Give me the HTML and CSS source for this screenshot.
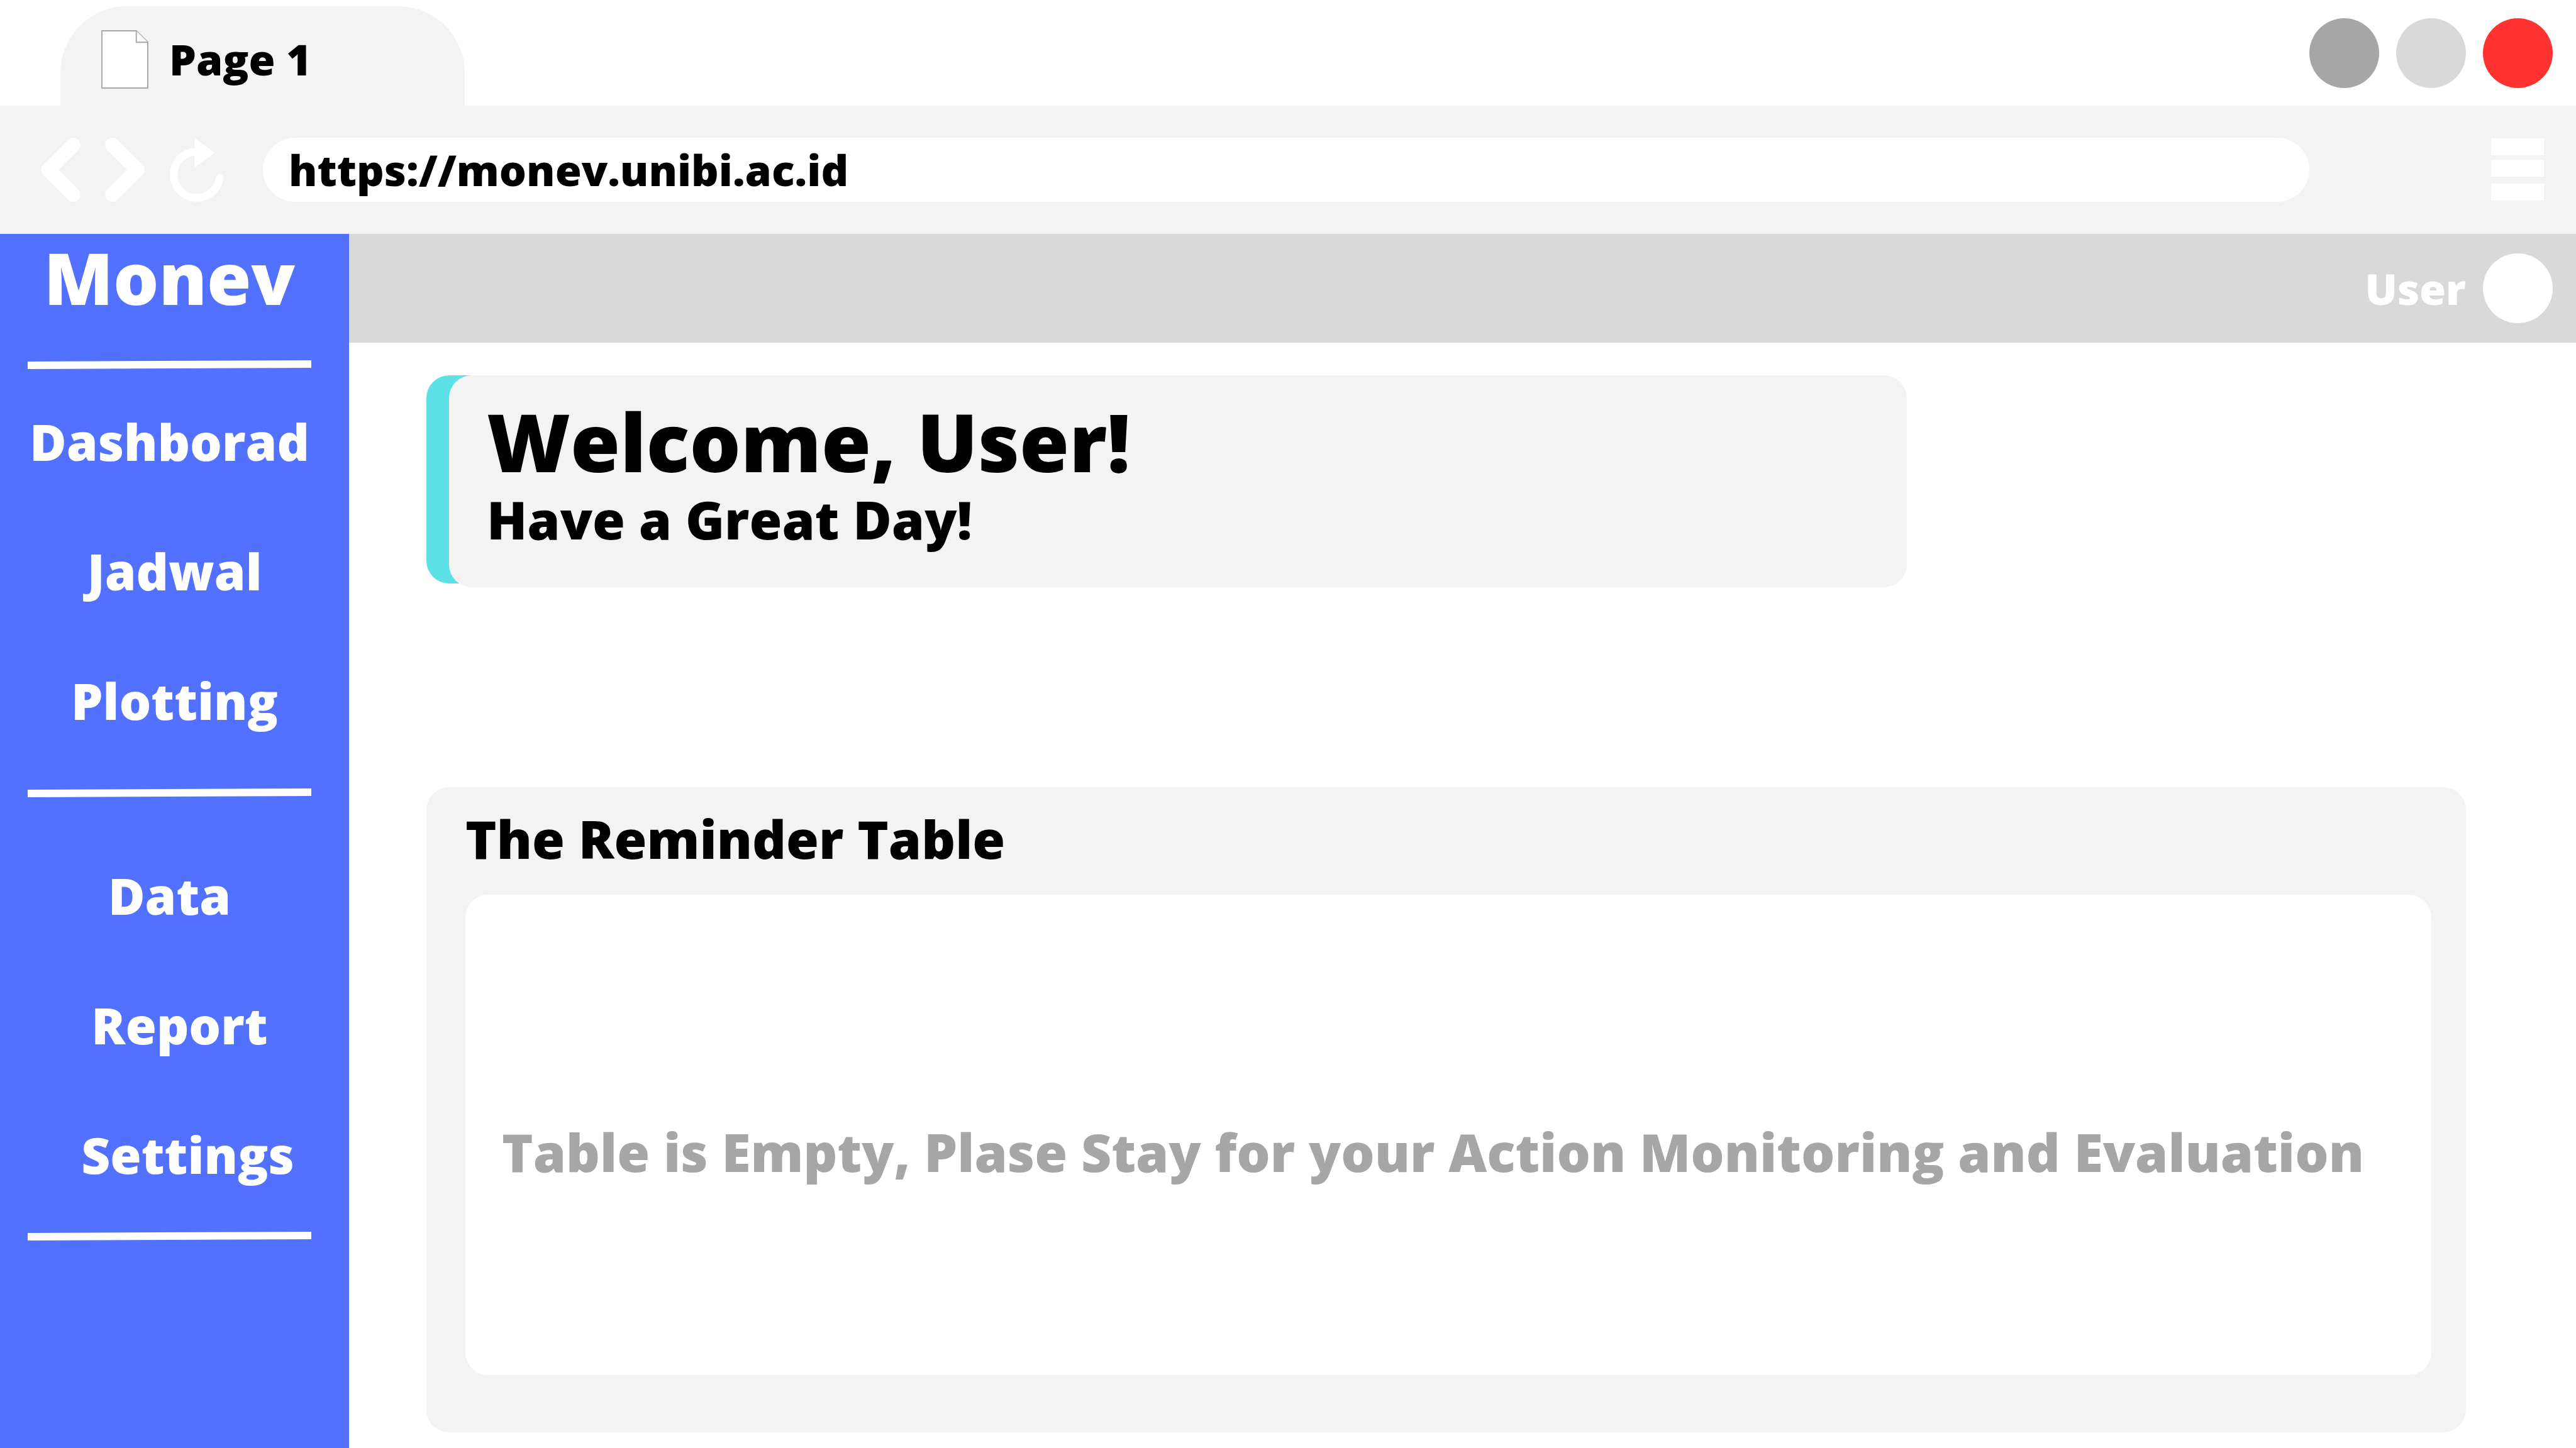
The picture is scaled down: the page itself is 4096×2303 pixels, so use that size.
FILE: index.html
```html
<!DOCTYPE html>
<html lang="id">
<head>
  <meta charset="utf-8">
  <title>Monev</title>
  <link rel="stylesheet" href="styles.css">
</head>
<body>
  <header class="browser">
    <div class="tabbar">
      <div class="tab">
        <svg class="tab-icon" viewBox="0 0 78 97" aria-hidden="true">
          <path d="M1 1H58L77 20V96H1Z"/>
          <path d="M58 1V20H77"/>
        </svg>
        <span class="tab-title">Page 1</span>
      </div>
      <div class="window-controls">
        <button class="window-button minimize" type="button" aria-label="Minimize"></button>
        <button class="window-button maximize" type="button" aria-label="Maximize"></button>
        <button class="window-button close" type="button" aria-label="Close"></button>
      </div>
    </div>
    <div class="toolbar">
      <div class="history">
        <button class="tool" type="button" aria-label="Back">
          <svg class="chevron" viewBox="0 0 65 106"><path d="M53 12L12 53L53 94"/></svg>
        </button>
        <button class="tool" type="button" aria-label="Forward">
          <svg class="chevron" viewBox="0 0 65 106"><path d="M12 12L53 53L12 94"/></svg>
        </button>
        <button class="tool" type="button" aria-label="Reload">
          <svg class="reload" viewBox="0 0 91 106">
            <path class="reload-ring" d="M84 67A38.5 38.5 0 1 1 43 22.8"/>
            <path class="reload-head" d="M42 0L76 25L42 49Z"/>
          </svg>
        </button>
      </div>
      <input class="address" type="text" value="https://monev.unibi.ac.id" aria-label="Address">
      <button class="tool" type="button" aria-label="Menu">
        <svg class="menu" viewBox="0 0 84 100">
          <path d="M0 0H84V27H0ZM0 34H84V61H0ZM0 72H84V99H0Z"/>
        </svg>
      </button>
    </div>
  </header>

  <div class="app">
    <aside class="sidebar">
      <div class="brand">Monev</div>
      <svg class="divider" viewBox="0 0 451 14" preserveAspectRatio="none"><path d="M0 2L451 0V12L0 14Z"/></svg>
      <nav class="nav-group nav-main">
        <a class="nav-link" href="#dashboard">Dashborad</a>
        <a class="nav-link indent-small" href="#jadwal">Jadwal</a>
        <a class="nav-link indent-small" href="#plotting">Plotting</a>
      </nav>
      <svg class="divider" viewBox="0 0 451 14" preserveAspectRatio="none"><path d="M0 2L451 0V12L0 14Z"/></svg>
      <nav class="nav-group nav-more">
        <a class="nav-link" href="#data">Data</a>
        <a class="nav-link indent" href="#report">Report</a>
        <a class="nav-link indent-wide" href="#settings">Settings</a>
      </nav>
      <svg class="divider" viewBox="0 0 451 14" preserveAspectRatio="none"><path d="M0 2L451 0V12L0 14Z"/></svg>
    </aside>

    <div class="page">
      <div class="topbar">
        <span class="user-name">User</span>
        <button class="avatar" type="button" aria-label="Account"></button>
      </div>
      <main class="content">
        <section class="welcome">
          <div class="welcome-card">
            <h1 class="welcome-title">Welcome, User!</h1>
            <p class="welcome-text">Have a Great Day!</p>
          </div>
        </section>
        <section class="reminder">
          <h2 class="reminder-title">The Reminder Table</h2>
          <div class="reminder-body">
            <p class="reminder-empty">Table is Empty, Plase Stay for your Action Monitoring and Evaluation</p>
          </div>
        </section>
      </main>
    </div>
  </div>
</body>
</html>
```

FILE: styles.css
```css
:root {
  --grey: #f3f3f3;
  --grey-mid: #d9d9d9;
  --grey-dark: #a6a6a6;
  --blue: #5271ff;
  --cyan: #5ce1e6;
  --red: #ff3131;
  --radius: 36px;
}

* {
  box-sizing: border-box;
}

body {
  margin: 0;
  min-height: 100vh;
  display: flex;
  flex-direction: column;
  background: #fff;
  color: #000;
  font-family: "Open Sans", "Noto Sans", sans-serif;
  font-weight: 800;
  font-size: 68px;
  line-height: 92px;
}

h1, h2, p {
  margin: 0;
  font-weight: 800;
}

button {
  padding: 0;
  border: 0;
  background: none;
}

svg {
  display: block;
}

/* Browser frame */
.tabbar {
  display: flex;
  justify-content: space-between;
  height: 168px;
  padding: 0 37px 0 96px;
}

.tab {
  display: flex;
  align-items: center;
  gap: 33px;
  width: 643px;
  margin-top: 10px;
  padding: 10px 65px 0;
  border-radius: 106px 106px 0 0;
  background: var(--grey);
}

.tab-icon {
  width: 75px;
  height: 93px;
  fill: #fff;
  stroke: var(--grey-dark);
  stroke-width: 2;
}

.window-controls {
  display: flex;
  align-items: center;
  gap: 27px;
}

.window-button,
.avatar {
  width: 111px;
  height: 111px;
  border-radius: 50%;
}

.minimize {
  background: var(--grey-dark);
}

.maximize {
  background: var(--grey-mid);
}

.close {
  background: var(--red);
}

.toolbar {
  display: flex;
  align-items: center;
  height: 204px;
  padding: 0 51px 0 65px;
  background: var(--grey);
}

.history {
  display: flex;
  gap: 39px;
}

.chevron {
  width: 63px;
  height: 102px;
  fill: none;
  stroke: #fff;
  stroke-width: 24;
  stroke-linecap: round;
  stroke-linejoin: round;
}

.reload {
  width: 87px;
  height: 102px;
}

.reload-ring {
  fill: none;
  stroke: #fff;
  stroke-width: 13;
  stroke-linecap: round;
}

.reload-head {
  fill: #fff;
}

.address {
  flex: 1;
  height: 102px;
  margin: 0 289px 0 62px;
  padding: 0 41px 2px;
  border: 0;
  border-radius: 51px;
  background: #fff;
  color: inherit;
  font: inherit;
}

.menu {
  width: 84px;
  height: 100px;
  fill: #fff;
}

/* Application */
.app {
  flex: 1;
  display: flex;
}

.sidebar {
  flex: none;
  width: 555px;
  padding-right: 16px;
  background: var(--blue);
  color: #fff;
  text-align: center;
}

.brand {
  font-size: 114px;
  line-height: 138px;
}

.divider {
  width: 451px;
  height: 14px;
  margin-left: 44px;
  fill: #fff;
}

.brand + .divider {
  margin-top: 63px;
}

.nav-group {
  display: flex;
  flex-direction: column;
  gap: 96px;
}

.nav-main {
  padding: 60px 0 85px;
}

.nav-more {
  padding: 101px 0 68px;
}

.nav-link {
  color: inherit;
  font-size: 80px;
  line-height: 110px;
  text-decoration: none;
}

.indent-small {
  padding-left: 16px;
}

.indent {
  padding-left: 32px;
}

.indent-wide {
  padding-left: 58px;
}

.page {
  flex: 1;
  display: flex;
  flex-direction: column;
}

.topbar {
  display: flex;
  align-items: center;
  justify-content: flex-end;
  gap: 27px;
  height: 173px;
  padding-right: 37px;
  background: var(--grey-mid);
  color: #fff;
}

.avatar {
  background: #fff;
}

.content {
  flex: 1;
  display: flex;
  flex-direction: column;
  padding: 52px 175px 25px 123px;
}

.welcome {
  position: relative;
  width: 72.6%;
  margin-bottom: 318px;
  padding-left: 36px;
}

/* Accent plate that shows behind the card's left edge */
.welcome::before {
  content: "";
  position: absolute;
  inset: 0 auto 6px 0;
  width: 120px;
  border-radius: var(--radius);
  background: var(--cyan);
}

.welcome-card {
  position: relative;
  padding: 35px 60px 54px;
  border-radius: var(--radius);
  background: var(--grey);
}

.welcome-title {
  font-size: 128px;
  line-height: 140px;
}

.welcome-text {
  font-size: 84px;
  line-height: 108px;
}

.reminder {
  flex: 1;
  display: flex;
  flex-direction: column;
  padding: 22px 55px 91px 62px;
  border-radius: var(--radius);
  background: var(--grey);
}

.reminder-title {
  margin-bottom: 29px;
  font-size: 84px;
  line-height: 120px;
}

.reminder-body {
  flex: 1;
  display: flex;
  align-items: center;
  padding: 54px 58px 0;
  border-radius: var(--radius);
  background: #fff;
  color: var(--grey-dark);
}

.reminder-empty {
  font-size: 84px;
  line-height: 120px;
}
```
